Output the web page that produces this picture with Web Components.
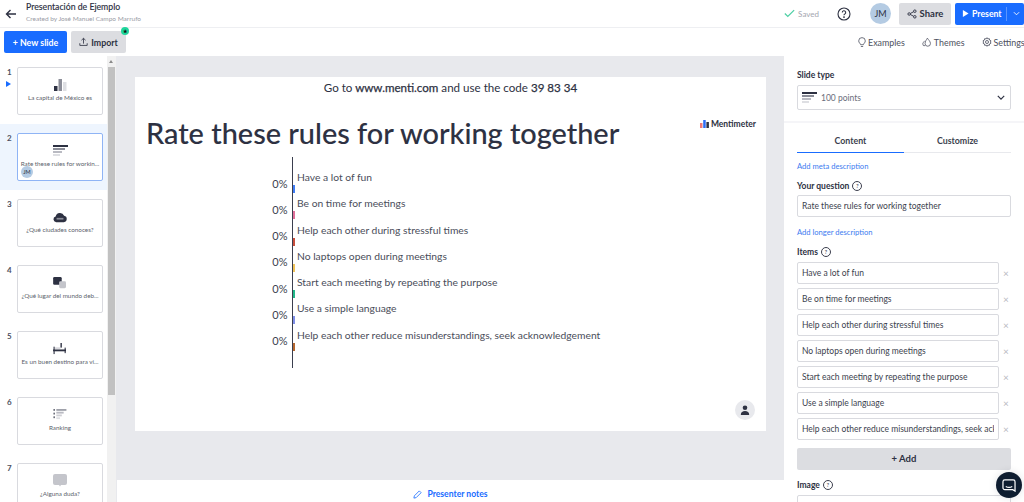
<!DOCTYPE html>
<html>
<head>
<meta charset="utf-8">
<style>
  html, body { margin: 0; height: 502px; overflow: hidden; background: #fff; }
  body { font-family: "Lato", "Open Sans", sans-serif; color: #2d3142; }
  #app { display: flex; flex-direction: column; height: 502px; }
  #main { display: flex; flex: 1; min-height: 0; }
</style>
</head>
<body>
<div id="app">
  <app-header></app-header>
  <app-toolbar></app-toolbar>
  <div id="main">
    <slide-list></slide-list>
    <slide-stage></slide-stage>
    <side-panel></side-panel>
  </div>
</div>
<chat-bubble></chat-bubble>

<script>
const ICONS = {
  back: '<svg width="12" height="12" viewBox="0 0 12 12" fill="none" stroke="#2d3142" stroke-width="1.4"><path d="M11 6H1.5M5.5 2 1.5 6l4 4"/></svg>',
  check: '<svg width="11" height="9" viewBox="0 0 13 10" fill="none" stroke="#4fd0a5" stroke-width="1.5"><path d="M1 5l3.500 3.500L12 1"/></svg>',
  help: '<svg width="14" height="14" viewBox="0 0 14 14" fill="none" stroke="#2d3142" stroke-width="1.1"><circle cx="7" cy="7" r="6"/><path d="M5.300 5.500a1.700 1.700 0 1 1 2.500 1.500c-.6.300-.8.600-.8 1.200"/><circle cx="7" cy="10.100" r=".4"/></svg>',
  share: '<svg width="10" height="10" viewBox="0 0 11 11" fill="none" stroke="#2d3142" stroke-width="1"><circle cx="2.400" cy="5.500" r="1.400"/><circle cx="8.600" cy="2.400" r="1.400"/><circle cx="8.600" cy="8.600" r="1.400"/><path d="M3.700 4.900 7.300 3M3.700 6.100 7.300 8"/></svg>',
  play: '<svg width="7" height="9" viewBox="0 0 8 9" fill="#fff"><path d="M1 .5 7.500 4.500 1 8.500z"/></svg>',
  chevW: '<svg width="7" height="5" viewBox="0 0 8 5" fill="none" stroke="#fff" stroke-width="1"><path d="M1 1l3 3 3-3"/></svg>',
  chevD: '<svg width="8" height="5" viewBox="0 0 10 6" fill="none" stroke="#2d3142" stroke-width="1.500"><path d="M1 1l4 4 4-4"/></svg>',
  upload: '<svg width="9" height="10" viewBox="0 0 11 11" fill="none" stroke="#2d3142" stroke-width="1"><path d="M5.500 7.500V1M3 3.300 5.500 1 8 3.300M1 7v2.700h9V7"/></svg>',
  bulb: '<svg width="8" height="11" viewBox="0 0 9 12" fill="none" stroke="#4d5060" stroke-width=".9"><path d="M3 8.500C2.600 7 .8 6.200.8 4.200a3.700 3.700 0 0 1 7.400 0C8.200 6.200 6.400 7 6 8.500zM3.200 10.500h2.600"/></svg>',
  drops: '<svg width="10" height="10" viewBox="0 0 13 12" fill="none" stroke="#4d5060" stroke-width="1"><path d="M7 1c1 2 4 4 4 7a3.500 3.500 0 0 1-7 0C4 5 6 3 7 1zM3.400 4.500C2.500 6 1 7 1 8.500a2.400 2.400 0 0 0 3 2.300"/></svg>',
  gear: '<svg width="10" height="10" viewBox="0 0 12 12" fill="none" stroke="#4d5060" stroke-width="1"><circle cx="6" cy="6" r="1.800"/><path d="M6 .8l1 1.500 1.800-.3.400 1.800 1.600.8-.7 1.400.7 1.400-1.600.8-.4 1.800L7 9.700l-1 1.500-1-1.500-1.800.3-.4-1.800-1.600-.8.700-1.400-.7-1.400 1.600-.8.400-1.800L5 2.300z"/></svg>',
  bars: '<svg width="13" height="12" viewBox="0 0 13 12"><rect x="0" y="7" width="3.500" height="5" fill="#2d3142"/><rect x="4.500" y="0" width="3.500" height="12" fill="#8b8d98"/><rect x="9" y="3" width="3.500" height="9" fill="#dedfe3"/></svg>',
  points: '<svg width="15" height="12" viewBox="0 0 15 12"><rect width="15" height="2" fill="#2d3142"/><rect y="3" width="12" height="2" fill="#8b8d98"/><rect y="6" width="9" height="2" fill="#b9bac2"/><rect y="9" width="7" height="2" fill="#dedfe3"/></svg>',
  cloud: '<svg width="14" height="12" viewBox="0 0 16 14"><path fill="#2d3142" d="M3.500 13a3.300 3.300 0 0 1-.6-6.500A5.200 5.200 0 0 1 12.800 5.500 3.800 3.800 0 0 1 12.500 13z"/><rect x="4" y="8" width="8" height="2" fill="#8b8d98"/></svg>',
  chat: '<svg width="14" height="12" viewBox="0 0 16 14"><rect x="0" y="0" width="10" height="9" rx="1.500" fill="#2d3142"/><rect x="7" y="5" width="8" height="8" rx="1.500" fill="#c4c5cb"/></svg>',
  scale: '<svg width="14" height="12" viewBox="0 0 15 13"><rect x="0" y="7" width="14" height="2" fill="#2d3142"/><rect x="0.500" y="4" width="1.200" height="8" fill="#2d3142"/><rect x="8" y="0" width="1.500" height="5" fill="#2d3142"/><rect x="12.500" y="5" width="1.200" height="6" fill="#2d3142"/><rect x="2" y="5" width="6" height="1" fill="#b9bac2"/></svg>',
  rank: '<svg width="14" height="11" viewBox="0 0 14 12"><rect x="0" y="0" width="1.200" height="2" fill="#2d3142"/><rect x="0" y="4" width="1.200" height="2" fill="#2d3142"/><rect x="0" y="8" width="1.200" height="2" fill="#2d3142"/><rect x="3" y="0" width="11" height="2" fill="#9fa1aa"/><rect x="3" y="3" width="8" height="2" fill="#b9bac2"/><rect x="3" y="6" width="6" height="2" fill="#cfd0d5"/><rect x="3" y="9" width="4" height="2" fill="#dedfe3"/></svg>',
  bubble: '<svg width="14" height="13" viewBox="0 0 14 13"><path fill="#c4c5cb" d="M2 0h10a2 2 0 0 1 2 2v7a2 2 0 0 1-2 2H8l-1 1.500L6 11H2a2 2 0 0 1-2-2V2a2 2 0 0 1 2-2z"/></svg>',
  user: '<svg width="10" height="10" viewBox="0 0 10 10" fill="#2d3142"><circle cx="5" cy="2.700" r="2.300"/><path d="M.8 10c0-3 1.800-4 4.200-4s4.200 1 4.200 4z"/></svg>',
  chatWhite: '<svg width="14" height="13" viewBox="0 0 15 14" fill="none" stroke="#fff" stroke-width="1.300"><path d="M3 1h9a2 2 0 0 1 2 2v10l-2.500-1.500H3a2 2 0 0 1-2-2V3a2 2 0 0 1 2-2z"/><path d="M4 8c2 1.200 5 1.200 7 0"/></svg>',
  logo: '<svg width="9" height="8" viewBox="0 0 9 8"><rect x="0" y="3" width="2.500" height="5" fill="#f07a7a"/><rect x="3.200" y="0" width="2.500" height="8" fill="#2d6df6"/><rect x="6.400" y="2" width="2.500" height="6" fill="#2d3142"/></svg>',
  pencil: '<svg width="9" height="9" viewBox="0 0 10 10" fill="none" stroke="#196cff" stroke-width=".9"><path d="M1 9l.5-2.500L7 1l2 2-5.500 5.500z"/></svg>'
};

class AppHeader extends HTMLElement {
  constructor() {
    super();
    this.attachShadow({ mode: 'open' });
    this.shadowRoot.innerHTML = `
    <style>
      :host { display: flex; align-items: center; height: 27px; flex: none; border-bottom: 1px solid #eeeff2; padding: 0 0 0 5px; }
      svg { flex: none; }
      .back { width: 12px; height: 12px; margin-right: 9px; display: flex; }
      .titles { flex: 1; margin-top: -3px; }
      .title { font-size: 8.700px; line-height: 12px; font-weight: 500; color: #2d3142; -webkit-text-stroke: .1px #2d3142; }
      .sub { font-size: 6.500px; line-height: 10px; color: #9a9ca6; margin-top: 1px; }
      .saved { display: flex; align-items: center; gap: 3px; font-size: 8px; color: #a4a6af; margin-right: 18px; }
      .help { display: flex; margin-right: 19px; }
      .avatar { width: 21px; height: 21px; border-radius: 50%; background: #b4cbe3; font-size: 9px; color: #2d3142; display: flex; align-items: center; justify-content: center; margin-right: 8px; }
      .share, .present { height: 22px; border-radius: 2px; display: flex; align-items: center; font-size: 9.500px; font-weight: 700; box-sizing: border-box; }
      .share { width: 52px; background: #dcdde1; color: #2d3142; justify-content: center; gap: 3px; margin-right: 4px; }
      .present { width: 69px; background: #196cff; color: #fff; padding-left: 7px; gap: 3px; font-size: 8.700px; }
      .present .sep { width: 1px; height: 14px; background: #5c96ff; margin-left: 1px; flex: none; }
      .present .chev { display: flex; margin-left: 3px; }
    </style>
    <span class="back">${ICONS.back}</span>
    <div class="titles">
      <div class="title">Presentación de Ejemplo</div>
      <div class="sub">Created by José Manuel Campo Marrufo</div>
    </div>
    <span class="saved">${ICONS.check}Saved</span>
    <span class="help">${ICONS.help}</span>
    <span class="avatar">JM</span>
    <span class="share">${ICONS.share}Share</span>
    <span class="present">${ICONS.play}<span>Present</span><span class="sep"></span><span class="chev">${ICONS.chevW}</span></span>`;
  }
}

class AppToolbar extends HTMLElement {
  constructor() {
    super();
    this.attachShadow({ mode: 'open' });
    this.shadowRoot.innerHTML = `
    <style>
      :host { display: flex; align-items: center; height: 28px; flex: none; padding: 0 0 0 4px; box-sizing: border-box; }
      svg { flex: none; }
      button { height: 22px; border: 0; border-radius: 2px; font: inherit; font-size: 8.800px; font-weight: 700; display: flex; align-items: center; justify-content: center; gap: 3px; padding: 0; position: relative; }
      .new { width: 63px; background: #196cff; color: #fff; margin-right: 4px; }
      .import { width: 55px; background: #dcdde1; color: #2d3142; }
      .dot { position: absolute; right: -3px; top: -4px; width: 8px; height: 8px; border-radius: 50%; background: #1fd69c; display: flex; align-items: center; justify-content: center; color: #111; font-size: 5px; line-height: 8px; }
      .links { margin-left: auto; display: flex; gap: 17px; font-size: 8.900px; color: #4d5060; width: 166px; box-sizing: border-box; }
      .links span { display: flex; align-items: center; gap: 2px; white-space: nowrap; }
    </style>
    <button class="new">+ New slide</button>
    <button class="import">${ICONS.upload}Import<span class="dot">★</span></button>
    <div class="links">
      <span>${ICONS.bulb}Examples</span>
      <span>${ICONS.drops}Themes</span>
      <span>${ICONS.gear}Settings</span>
    </div>`;
  }
}

class SlideThumb extends HTMLElement {
  constructor() {
    super();
    this.attachShadow({ mode: 'open' });
  }
  connectedCallback() {
    const active = this.hasAttribute('active');
    this.shadowRoot.innerHTML = `
    <style>
      :host { display: block; height: 66px; flex: none; position: relative; background: ${active ? '#eef5fe' : 'transparent'}; }
      .num { position: absolute; left: 7px; top: 9px; font-size: 8px; font-weight: 700; color: #4d5060; }
      .card { position: absolute; left: 17px; top: 9px; width: 86px; height: 48px; box-sizing: border-box; background: #fff; border: 1px solid ${active ? '#8fb4f5' : '#d9dadf'}; border-radius: 2px; display: flex; flex-direction: column; align-items: center; justify-content: center; padding-bottom: 3px; }
      .text { font-size: 6.300px; line-height: 9px; color: #5c5f6c; margin-top: 1px; white-space: nowrap; }
      .icon { display: flex; height: 14px; align-items: center; }
      .play { position: absolute; left: 6px; top: 23px; width: 0; height: 0; border-left: 5px solid #196cff; border-top: 3.500px solid transparent; border-bottom: 3.500px solid transparent; }
      .jm { position: absolute; left: 3px; bottom: 2px; width: 12px; height: 12px; border-radius: 50%; background: #b4cbe3; font-size: 5.500px; line-height: 12px; text-align: center; color: #2d3142; }
    </style>
    <span class="num">${this.getAttribute('num')}</span>
    ${this.hasAttribute('playing') ? '<span class="play"></span>' : ''}
    <div class="card">
      <span class="icon">${ICONS[this.getAttribute('icon')]}</span>
      <span class="text"><slot></slot></span>
      ${active ? '<span class="jm">JM</span>' : ''}
    </div>`;
  }
}

class SlideList extends HTMLElement {
  constructor() {
    super();
    this.attachShadow({ mode: 'open' });
    this.shadowRoot.innerHTML = `
    <style>
      :host { display: flex; width: 116px; flex: none; overflow: hidden; }
      .list { width: 107px; flex: none; padding-top: 2px; display: flex; flex-direction: column; }
      .track { width: 9px; flex: none; background: #f1f1f1; padding-top: 11px; box-sizing: border-box; position: relative; }
      .track::before { content: ""; position: absolute; left: 2px; top: 4px; border-left: 2.500px solid transparent; border-right: 2.500px solid transparent; border-bottom: 3px solid #8a8a8a; }
      .thumb { height: 328px; background: #c1c1c1; margin: 0 1px; }
    </style>
    <div class="list">
      <slide-thumb num="1" icon="bars" playing>La capital de México es</slide-thumb>
      <slide-thumb num="2" icon="points" active>Rate these rules for workin...</slide-thumb>
      <slide-thumb num="3" icon="cloud">¿Qué ciudades conoces?</slide-thumb>
      <slide-thumb num="4" icon="chat">¿Qué lugar del mundo deb...</slide-thumb>
      <slide-thumb num="5" icon="scale">Es un buen destino para vi...</slide-thumb>
      <slide-thumb num="6" icon="rank">Ranking</slide-thumb>
      <slide-thumb num="7" icon="bubble">¿Alguna duda?</slide-thumb>
    </div>
    <div class="track"><div class="thumb"></div></div>`;
  }
}

class ScoreRow extends HTMLElement {
  constructor() {
    super();
    this.attachShadow({ mode: 'open' });
  }
  connectedCallback() {
    this.shadowRoot.innerHTML = `
    <style>
      :host { display: block; height: 26.300px; position: relative; }
      .pct { position: absolute; right: 100%; margin-right: 5px; top: 8.500px; font-size: 11px; line-height: 15px; color: #3c3f4e; }
      .tick { position: absolute; left: 0; top: 18px; width: 2px; height: 8px; background: ${this.getAttribute('color')}; }
      .label { position: absolute; left: 4.500px; top: 3px; font-size: 10.300px; line-height: 15px; color: #4a4d5a; white-space: nowrap; }
    </style>
    <span class="pct">0%</span>
    <span class="tick"></span>
    <span class="label"><slot></slot></span>`;
  }
}

class SlideStage extends HTMLElement {
  constructor() {
    super();
    this.attachShadow({ mode: 'open' });
    this.shadowRoot.innerHTML = `
    <style>
      :host { display: flex; flex-direction: column; flex: 1; min-width: 0; background: #e8e9ed; }
      .slide-wrap { flex: 1; padding: 21px 18px 0 19px; }
      .slide { height: 354px; background: #fff; position: relative; }
      .code { text-align: center; font-size: 11.600px; line-height: 22px; color: #2d3142; }
      .code b { font-weight: 400; -webkit-text-stroke: .25px #2d3142; }
      .top { display: flex; align-items: center; justify-content: space-between; padding: 16px 10px 0 11px; }
      h1 { margin: 0; font-size: 28.900px; line-height: 36px; font-weight: 500; color: #2d3142; white-space: nowrap; -webkit-text-stroke: .1px #2d3142; }
      .logo { display: flex; align-items: center; gap: 2px; font-size: 8.500px; font-weight: 700; color: #2d3142; margin-top: -18px; }
      .chart { margin: 6px 0 0 156.500px; height: 211px; box-sizing: border-box; border-left: 1.500px solid #3a3e4e; padding-top: 10px; }
      .user { position: absolute; right: 11px; bottom: 11px; width: 20px; height: 20px; border-radius: 50%; background: #e8e9ed; display: flex; align-items: center; justify-content: center; }
      .notes { height: 22px; flex: none; margin-left: 1px; padding-top: 6px; box-sizing: border-box; background: #fff; font-size: 8.600px; font-weight: 700; color: #196cff; display: flex; align-items: center; justify-content: center; gap: 5px; }
    </style>
    <div class="slide-wrap">
      <div class="slide">
        <div class="code">Go to <b>www.menti.com</b> and use the code <b>39 83 34</b></div>
        <div class="top">
          <h1>Rate these rules for working together</h1>
          <span class="logo">${ICONS.logo}Mentimeter</span>
        </div>
        <div class="chart">
          <score-row color="#3f7df6">Have a lot of fun</score-row>
          <score-row color="#e0709a">Be on time for meetings</score-row>
          <score-row color="#c84f3e">Help each other during stressful times</score-row>
          <score-row color="#f0c35a">No laptops open during meetings</score-row>
          <score-row color="#23b98a">Start each meeting by repeating the purpose</score-row>
          <score-row color="#7f8fe8">Use a simple language</score-row>
          <score-row color="#b5672f">Help each other reduce misunderstandings, seek acknowledgement</score-row>
        </div>
        <span class="user">${ICONS.user}</span>
      </div>
    </div>
    <div class="notes">${ICONS.pencil}Presenter notes</div>`;
  }
}

class ItemInput extends HTMLElement {
  constructor() {
    super();
    this.attachShadow({ mode: 'open' });
    this.shadowRoot.innerHTML = `
    <style>
      :host { display: flex; align-items: center; height: 22px; margin-bottom: 4px; }
      .box { width: 202px; flex: none; height: 22px; box-sizing: border-box; border: 1px solid #d9dadf; border-radius: 2px; padding: 0 4px; font-size: 8.500px; line-height: 20px; color: #3c3f4e; }
      .clip { display: block; overflow: hidden; white-space: nowrap; }
      .x { margin-left: 4px; font-size: 10px; line-height: 10px; color: #b9bac2; }
    </style>
    <div class="box"><span class="clip"><slot></slot></span></div>
    <span class="x">×</span>`;
  }
}

class SidePanel extends HTMLElement {
  constructor() {
    super();
    this.attachShadow({ mode: 'open' });
    this.shadowRoot.innerHTML = `
    <style>
      :host { display: block; width: 240px; flex: none; background: #fff; overflow: hidden; font-size: 8.500px; }
      .top { padding: 13px 13px 11px; border-bottom: 2px solid #f5f5f8; }
      .body { padding: 0 13px; }
      .lbl { font-size: 8.500px; line-height: 12px; font-weight: 700; color: #2d3142; display: flex; align-items: center; gap: 3px; }
      .select { margin-top: 4px; height: 25px; border: 1px solid #d9dadf; border-radius: 2px; box-sizing: border-box; display: flex; align-items: center; padding: 0 5px 0 4px; gap: 4px; color: #6b6e7b; }
      .select svg:last-child { margin-left: auto; }
      .tabs { display: grid; grid-template-columns: 107px 107px; grid-template-rows: 30px; height: 30px; }
      .tabs span { font-size: 8.800px; font-weight: 700; color: #3c3f4e; text-align: center; line-height: 35px; border-bottom: 1px solid #e8e9ed; box-sizing: border-box; overflow: hidden; }
      .tabs .on { border-bottom: 1.500px solid #196cff; }
      .link { font-size: 7.600px; line-height: 12px; color: #3d7cf0; display: block; }
      .field { height: 22px; box-sizing: border-box; border: 1px solid #d9dadf; border-radius: 2px; padding: 0 4px; line-height: 20px; color: #3c3f4e; margin-top: 3px; }
      .add { height: 22px; background: #dcdde1; border-radius: 2px; text-align: center; line-height: 22px; font-size: 9.500px; font-weight: 700; color: #2d3142; margin-top: 8px; }
      .q { width: 8px; height: 8px; border: 1px solid #3c3f4e; border-radius: 50%; font-size: 6px; line-height: 8px; text-align: center; font-weight: 400; }
      .image-field { height: 22px; border: 1px solid #d9dadf; border-radius: 2px; margin-top: 4px; box-sizing: border-box; }
    </style>
    <div class="top">
      <div class="lbl">Slide type</div>
      <div class="select">${ICONS.points}100 points${ICONS.chevD}</div>
    </div>
    <div class="body">
      <div class="tabs"><span class="on">Content</span><span>Customize</span></div>
      <a class="link" style="margin-top:7px">Add meta description</a>
      <div class="lbl" style="margin-top:8px">Your question <span class="q">?</span></div>
      <div class="field">Rate these rules for working together</div>
      <a class="link" style="margin-top:9px">Add longer description</a>
      <div class="lbl" style="margin-top:8px">Items <span class="q">?</span></div>
      <div style="margin-top:4px">
        <item-input>Have a lot of fun</item-input>
        <item-input>Be on time for meetings</item-input>
        <item-input>Help each other during stressful times</item-input>
        <item-input>No laptops open during meetings</item-input>
        <item-input>Start each meeting by repeating the purpose</item-input>
        <item-input>Use a simple language</item-input>
        <item-input>Help each other reduce misunderstandings, seek acknowledgement</item-input>
      </div>
      <div class="add">+ Add</div>
      <div class="lbl" style="margin-top:9px">Image <span class="q">?</span></div>
      <div class="image-field"></div>
    </div>`;
  }
}

class ChatBubble extends HTMLElement {
  constructor() {
    super();
    this.attachShadow({ mode: 'open' });
    this.shadowRoot.innerHTML = `
    <style>
      :host { position: fixed; left: 996px; top: 472px; width: 26px; height: 26px; border-radius: 50%; background: #0e1d30; display: flex; align-items: center; justify-content: center; box-shadow: 0 0 8px rgba(14,29,48,.12); }
    </style>
    ${ICONS.chatWhite}`;
  }
}

customElements.define('app-header', AppHeader);
customElements.define('app-toolbar', AppToolbar);
customElements.define('slide-thumb', SlideThumb);
customElements.define('slide-list', SlideList);
customElements.define('score-row', ScoreRow);
customElements.define('slide-stage', SlideStage);
customElements.define('item-input', ItemInput);
customElements.define('side-panel', SidePanel);
customElements.define('chat-bubble', ChatBubble);
</script>
</body>
</html>
